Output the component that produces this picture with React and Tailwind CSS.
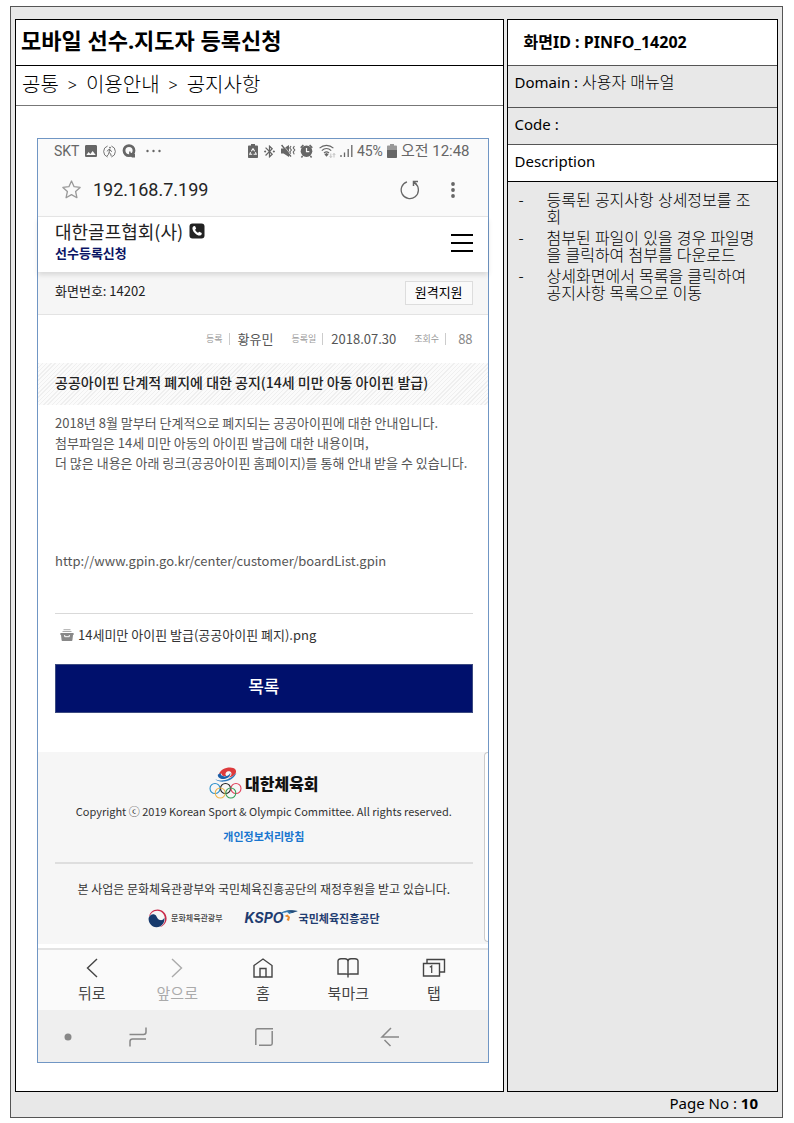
import React from 'react';
import { MdImage, MdBluetoothConnected } from 'react-icons/md';

const notes = [
  '등록된 공지사항 상세정보를 조회',
  '첨부된 파일이 있을 경우 파일명을 클릭하여 첨부를 다운로드',
  '상세화면에서 목록을 클릭하여 공지사항 목록으로 이동',
];

function StatusBar() {
  return (
    <div className="flex h-6 items-center justify-between pr-[18px] pl-4 text-[#666]">
      <div className="flex items-center">
        <span className="mr-1 text-sm">SKT</span>
        <MdImage className="mr-1 h-4 w-4" />
        <svg className="mr-1.5 h-[13px] w-[13px]" viewBox="0 0 13 13" fill="none" stroke="currentColor">
          <path d="M4.6 12A5.8 5.8 0 0 1 4.6 1M8.4 1a5.8 5.8 0 0 1 0 11" strokeWidth="0.9" />
          <circle cx="7" cy="2.6" r="0.9" fill="currentColor" stroke="none" />
          <path d="M6.7 4.2 6 7.4l1.7 1.4.5 2.4M6 7.4l-.6 2-1.4 1.8M4.2 6.4l1-1.6 1.6-.4 1 1.6 1.2.5" strokeWidth="0.9" />
        </svg>
        <svg className="mr-2.5 h-[14px] w-[14px]" viewBox="0 0 14 14" fill="none" stroke="currentColor">
          <circle cx="7" cy="6.6" r="5" strokeWidth="2.8" />
          <path d="M8 8.5v3l2 1.9h3V10" fill="currentColor" stroke="none" />
          <path d="M7.8 7.6v3" strokeWidth="1.4" />
        </svg>
        <svg className="h-1 w-4" viewBox="0 0 16 4" fill="currentColor">
          <circle cx="1.5" cy="2" r="1.2" />
          <circle cx="7.5" cy="2" r="1.2" />
          <circle cx="13.5" cy="2" r="1.2" />
        </svg>
      </div>

      <div className="flex items-center">
        <svg className="mr-1 h-[14px] w-[10px]" viewBox="0 0 10 14" fill="currentColor">
          <path d="M3 0h4v1.6h2.2c.5 0 .8.3.8.8v10.8c0 .5-.3.8-.8.8H.8a.8.8 0 0 1-.8-.8V2.4c0-.5.3-.8.8-.8H3z" />
          <path d="M5 4.5 3.4 7.2M5 4.5l1.6 2.7M2.6 8.2l-.8 2h2.4M7.4 8.2l.8 2H5.6" stroke="#fafafa" fill="none" strokeWidth="1.1" />
        </svg>
        <MdBluetoothConnected className="mr-1 h-[15px] w-[15px]" />
        <svg className="mr-1 h-[14px] w-[15px]" viewBox="0 0 15 14" fill="currentColor">
          <path d="M0 4.5h2.600L8 1v12L2.600 9.500H0z" />
          <path d="M.6 1 10 12.600" stroke="currentColor" strokeWidth="1.600" />
          <path d="M1.600.4 11 12" stroke="#fafafa" strokeWidth="0.600" />
          <path d="m10 2-1.200 2 1.600 2-1.600 2 1 1.600M13.400 2l-1.200 2 1.600 2-1.600 2 1 2.400" stroke="currentColor" fill="none" strokeWidth="1.100" />
        </svg>
        <svg className="mr-1.5 h-[14px] w-[13px]" viewBox="0 0 13 14">
          <circle cx="6.500" cy="7.200" r="5.800" fill="currentColor" />
          <path d="M.7 3.800 3.400 1M12.300 3.800 9.600 1M2.600 12 1.400 13.400M10.400 12l1.200 1.400" stroke="currentColor" strokeWidth="1.600" />
          <path d="M6.500 4v3.600h2.800" stroke="#fafafa" fill="none" strokeWidth="1.200" />
        </svg>
        <svg className="mr-1 h-[15px] w-[17px]" viewBox="0 0 17 15" fill="none" stroke="currentColor" strokeWidth="1.100">
          <path d="M.6 4.200c4-3.800 9.800-3.800 13.800 0M2.800 6.600c2.800-2.600 6.600-2.600 9.400 0M5 9c1.600-1.400 3.400-1.400 5 0" />
          <path d="m6.200 10.400 1.300-.8 1.300.8-1.300 1.600z" fill="currentColor" />
          <path d="M11.800 9.500v4m-1.300-1.300 1.300 1.300 1.300-1.300M15 13.500v-4m-1.200 1.300L15 9.500l1.200 1.300" stroke="#aaa" strokeWidth="0.700" />
        </svg>
        <svg className="mr-1 h-[14px] w-[13px]" viewBox="0 0 13 14" stroke="currentColor" strokeWidth="1.300">
          <path d="M1 11v2M4.500 8.500V13M8.200 5v8M11.800 1v12" />
        </svg>
        <span className="mr-1 text-sm">45%</span>
        <svg className="mr-1 h-[14px] w-[10px]" viewBox="0 0 10 14">
          <path d="M3 0h4v1.600h2.200c.5 0 .8.3.8.8V6H0V2.400c0-.5.3-.8.8-.8H3z" fill="#999" />
          <path d="M0 6h10v7.200c0 .5-.3.8-.8.8H.8a.8.8 0 0 1-.8-.8z" fill="currentColor" />
        </svg>
        <span className="text-[15px]">오전 12:48</span>
      </div>
    </div>
  );
}

function AddressBar() {
  return (
    <div className="flex h-[54px] items-center border-b border-[#e6e6e6] pr-[31px] pl-6 text-[#666]">
      <svg className="h-[19px] w-[19px]" viewBox="0 0 19 19" fill="none" stroke="#999" strokeWidth="1.300" strokeLinejoin="round">
        <path d="m9.500 1 2.600 5.700 6 .7-4.500 4.100 1.300 6.200-5.400-3.100-5.400 3.100 1.300-6.200L.9 7.400l6-.7z" />
      </svg>
      <input
        aria-label="주소"
        defaultValue="192.168.7.199"
        className="ml-3 min-w-0 flex-1 bg-transparent text-lg text-[#252525] outline-none"
      />
      <button aria-label="새로고침">
        <svg className="h-5 w-5" viewBox="0 0 20 20" fill="none" stroke="currentColor" strokeWidth="1.300">
          <path d="M7 1.800A8.600 8.600 0 1 0 15.500 3.500" />
          <path d="M18 1.500h-4.500v4.500M13.500 1.500l3 3" strokeWidth="1.500" />
        </svg>
      </button>
      <button aria-label="더보기" className="ml-[29px]">
        <svg className="h-[18px] w-2" viewBox="0 0 8 18" fill="currentColor">
          <circle cx="4" cy="3" r="1.900" />
          <circle cx="4" cy="9" r="1.900" />
          <circle cx="4" cy="15" r="1.900" />
        </svg>
      </button>
    </div>
  );
}

function SiteHeader() {
  return (
    <header className="relative flex h-[55px] items-center justify-between bg-white pr-[15px] pl-[17px] shadow-[0_3px_5px_rgba(0,0,0,0.12)]">
      <div className="pb-2">
        <div className="flex items-center text-lg leading-6 text-[#222]">
          대한골프협회(사)
          <svg className="ml-1.5 h-4 w-4" viewBox="0 0 16 16">
            <rect x="0.500" y="0.500" width="15" height="15" rx="3" fill="#222" />
            <path d="M4.600 3.200 6 3l1.200 2.600-1.100 1.200c.6 1.300 1.500 2.300 2.900 3l1.300-1.100 2.500 1.300-.3 1.500c-.4 1-1.800 1.300-3.100.9-2.800-.9-5-3.200-5.800-5.900-.4-1.500 0-2.700 1-3.300z" fill="#fff" />
          </svg>
        </div>
        <div className="text-[13px] leading-5 font-bold text-[#0a1464]">선수등록신청</div>
      </div>
      <button aria-label="메뉴" className="mb-1 flex w-[22px] flex-col gap-1.5">
        <span className="h-0.5 bg-black" />
        <span className="h-0.5 bg-black" />
        <span className="h-0.5 bg-black" />
      </button>
    </header>
  );
}

function MetaItem({ label, value, valueClass = 'text-[#555]' }) {
  return (
    <div className="flex items-center">
      <dt className="border-r border-[#ccc] pr-1.5 text-[9px] leading-3 text-[#999]">{label}</dt>
      <dd className={`pl-2 text-[13px] leading-5 ${valueClass}`}>{value}</dd>
    </div>
  );
}

function Notice() {
  return (
    <article className="bg-white">
      <dl className="flex h-12 items-center justify-end gap-[18px] pr-[15px]">
        <MetaItem label="등록" value="황유민" />
        <MetaItem label="등록일" value="2018.07.30" />
        <MetaItem label="조회수" value="88" valueClass="ml-1 text-[#888]" />
      </dl>

      <h2 className="bg-[repeating-linear-gradient(135deg,#efefef_0px,#efefef_1px,#fbfbfb_1px,#fbfbfb_3px)] pt-[9px] pr-[15px] pb-[13px] pl-[17px] text-sm leading-5 font-medium text-[#222]">
        공공아이핀 단계적 폐지에 대한 공지(14세 미만 아동 아이핀 발급)
      </h2>

      <div className="pt-2 pr-[15px] pl-[17px]">
        <div className="text-[13px] leading-5 text-[#555]">
          <p>2018년 8월 말부터 단계적으로 폐지되는 공공아이핀에 대한 안내입니다.</p>
          <p>첨부파일은 14세 미만 아동의 아이핀 발급에 대한 내용이며,</p>
          <p>더 많은 내용은 아래 링크(공공아이핀 홈페이지)를 통해 안내 받을 수 있습니다.</p>
          <p className="mt-[78px]">
            <a href="http://www.gpin.go.kr/center/customer/boardList.gpin">
              http://www.gpin.go.kr/center/customer/boardList.gpin
            </a>
          </p>
        </div>

        <a href="#file" className="mt-[42px] flex h-[42px] items-center border-t border-[#d9d9d9] pl-[5px] text-[13px] text-[#333]">
          <svg className="mr-1 h-3 w-[14px]" viewBox="0 0 14 12">
            <path d="M3.500.700h7M2.500 2.500h9" stroke="#aaa" strokeWidth="1" />
            <path d="M.4 4h13.200v2H13l-.6 5.200c0 .5-.4.800-.8.800H2.400c-.4 0-.8-.3-.8-.8L1 6H.4z" fill="#888" />
            <path d="M4.700 6v1.700h4.600V6" stroke="#fff" fill="none" strokeWidth="1" />
          </svg>
          14세미만 아이핀 발급(공공아이핀 폐지).png
        </a>

        <button className="mt-[9px] h-[49px] w-full border border-[#3c4a80] bg-[#00106c] pb-1.5 text-[17px] font-medium text-white">
          목록
        </button>
      </div>
    </article>
  );
}

function OlympicLogo() {
  return (
    <svg className="h-8 w-[33px]" viewBox="0 0 33 32" fill="none">
      <path d="M10 7.500C11 3 16 .6 21 .6c5 0 7.200 2.800 5.600 6-1.200 2.400-4.200 3.900-7.200 3.800 2.500-1.200 3.800-3.200 2.800-4.900-1-1.600-4-1.500-5.300.2-.8 1.200-.5 2.500.6 3.200-3 .6-5-.4-5-2.400-.9.200-1.800.6-2.500 1z" fill="#dd3a3c" />
      <path d="M8.800 7.800c.8-.7 2-1.200 3-1.200-.2 2 2 3.100 5 2.700 2.500-.4 4-1.700 4.300-3.200 1 1.700-1 4.700-4.800 5.700-4 1-7.700-.8-7.500-4z" fill="#1d5fa8" />
      <path d="M6.200 12.200c6 2.800 14.500 1.300 21.300-6.400-2 5-7 8.400-12.500 8.800-3.500.3-7-.6-8.800-2.400z" fill="#2a78bd" />
      <g strokeWidth="1.100">
        <circle cx="6" cy="21.500" r="5" stroke="#2b8fcb" />
        <circle cx="16.500" cy="21.500" r="5" stroke="#222" />
        <circle cx="27" cy="21.500" r="5" stroke="#e2435c" />
        <circle cx="11.200" cy="26" r="5" stroke="#efb54a" />
        <circle cx="21.800" cy="26" r="5" stroke="#35a05a" />
      </g>
    </svg>
  );
}

function SiteFooter() {
  return (
    <footer className="relative mt-[39px] bg-[#f6f6f6] pt-[15px] pr-[15px] pb-4 pl-[17px] text-center text-[#333]">
      <div className="flex items-center justify-center">
        <OlympicLogo />
        <span className="ml-[3px] text-base leading-8 font-black text-[#111]">대한체육회</span>
      </div>
      <p className="mt-0.5 text-[11px] leading-5">
        Copyright ⓒ 2019 Korean Sport &amp; Olympic Committee. All rights reserved.
      </p>
      <a href="#privacy" className="mt-[5px] block text-[11px] leading-5 font-bold text-[#1976cf]">
        개인정보처리방침
      </a>
      <div className="mt-4 h-0.5 bg-[#dedede]" />
      <p className="mt-[15px] text-xs leading-5">
        본 사업은 문화체육관광부와 국민체육진흥공단의 재정후원을 받고 있습니다.
      </p>
      <div className="mt-[9px] flex h-5 items-center justify-center">
        <svg className="h-[19px] w-[19px]" viewBox="0 0 19 19">
          <path d="M1 9C1 3.500 5 .4 9.600.4c5 0 9 4 9 9.100 0 4.500-3.600 8-7 8.600 3-1.500 5.400-4.200 5.400-7.600C17 5 13 1.800 9.300 1.800 5 1.800 2 5 1 9z" fill="#c92a4a" />
          <path d="M.6 9c1-2.700 3.300-4.200 5.300-3.700 3.300.7 2.800 5.200 6.300 5.800 2 .3 3.700-.8 4.200-2.600.7 5.300-3 9.900-8 9.800C3.600 18 .2 13.800.6 9z" fill="#173a6d" />
        </svg>
        <span className="ml-1 text-[8px] leading-5 font-medium text-[#444]">문화체육관광부</span>
        <span className="ml-[22px] font-['Inter','Noto_Sans',sans-serif] text-sm leading-5 font-bold text-[#1f3c70] italic">
          KSPO
        </span>
        <svg className="-ml-1 h-5 w-[18px]" viewBox="0 0 18 20">
          <path d="M0 6C3 2 9 1.500 18 3c-3 .8-6 2.200-9 3-.5-1.200-1.500-1.800-3-1.600C3 4.500 1.500 5.200 0 6z" fill="#3579ad" />
          <path d="M6.500 2.800c3-1 6-.8 11 .2l-5.500 2c-1-1.200-3-2-5.500-2.200z" fill="#244a78" />
          <path d="m4.500 8 3-1.500L10 9l-1 4-2.500-1L8 9.500z" fill="#e98a2d" />
        </svg>
        <span className="ml-px text-[11px] leading-5 font-bold text-[#1f3c70]">국민체육진흥공단</span>
      </div>
      <span className="absolute top-0 right-0 h-[190px] w-1 rounded-l border-y border-l border-[#ccc] bg-white" />
    </footer>
  );
}

function NavButton({ label, disabled, children }) {
  return (
    <button disabled={disabled} className="flex flex-1 flex-col items-center text-[#444] disabled:text-[#aaa]">
      <svg className="h-6 w-6" viewBox="0 0 24 24" fill="none" stroke="currentColor" strokeWidth="1.400">
        {children}
      </svg>
      <span className="mt-0.5 text-[15px] leading-6">{label}</span>
    </button>
  );
}

function BrowserNav() {
  return (
    <nav className="mt-1 flex h-[62px] border-t-2 border-[#e3e3e3] bg-[#fafafa] px-[11px] pt-1.5">
      <NavButton label="뒤로">
        <path d="m17 3-9.500 9 9.500 9" />
      </NavButton>
      <NavButton label="앞으로" disabled>
        <path d="m7 3 9.500 9L7 21" />
      </NavButton>
      <NavButton label="홈">
        <path d="M3 9.500 12 3l9 6.500V21H3z" />
        <path d="M9 21v-8.500h6V21" />
      </NavButton>
      <NavButton label="북마크">
        <path d="M12 21.500V5.500C12 3.500 10.500 2.800 9 2.800H5C3.200 2.800 2 3.500 2 5v13h7c1.600 0 3-.2 3 1 0-1.200 1.400-1 3-1h7V5c0-1.500-1.200-2.200-3-2.200h-4c-1.500 0-3 .7-3 2.700" />
      </NavButton>
      <NavButton label="탭">
        <path d="M1.500 7.500h16v12.500h-16zM5 7.500v-4h17.500V16h-5" />
        <path d="M7.800 11.300 9.700 10v7" strokeWidth="1.200" />
      </NavButton>
    </nav>
  );
}

function SoftKeys() {
  return (
    <div className="flex h-[52px] items-center bg-[#efefef] pt-0.5 pl-[26px] text-[#888]">
      <svg className="mr-14 h-2 w-2" viewBox="0 0 8 8" fill="currentColor">
        <circle cx="4" cy="4" r="3.500" />
      </svg>
      <svg className="mr-[106px] h-5 w-5" viewBox="0 0 20 20" fill="none" stroke="currentColor" strokeWidth="1.500">
        <path d="M1.500 7.500h14c1.500 0 2.500-.8 2.500-2.500V.5M18 12H4.500C3 12 2 13 2 14.500V19.500" />
      </svg>
      <svg className="mr-[106px] h-5 w-5" viewBox="0 0 20 20" fill="none" stroke="currentColor" strokeWidth="1.500">
        <path d="M1.800 18V3.500c0-1 .7-1.700 1.700-1.700H19M18.200 4v12.500c0 1-.7 1.700-1.700 1.700H5" />
      </svg>
      <svg className="h-5 w-5" viewBox="0 0 20 20" fill="none" stroke="currentColor" strokeWidth="1.500">
        <path d="M11 1 2 10h17M4.500 13 10.500 19" />
      </svg>
    </div>
  );
}

function Phone() {
  return (
    <div className="border border-[#7096c4] bg-white font-['Noto_Sans_CJK_KR',sans-serif]">
      <div className="bg-[#fafafa] font-['Roboto','Noto_Sans_CJK_KR',sans-serif]">
        <StatusBar />
        <AddressBar />
      </div>
      <SiteHeader />
      <div className="flex h-[43px] items-center justify-between border-b border-[#e3e3e3] bg-[#f6f6f6] pr-[15px] pl-[17px] text-[13px] text-[#222]">
        <span className="pb-1">화면번호: 14202</span>
        <button className="h-6 border border-[#ddd] bg-[#fafafa] px-[9px] pb-1 leading-5 text-black">원격지원</button>
      </div>
      <Notice />
      <SiteFooter />
      <div className="font-['Roboto','Noto_Sans_CJK_KR',sans-serif]">
        <BrowserNav />
        <SoftKeys />
      </div>
    </div>
  );
}

export default function App() {
  return (
    <div className="bg-white pt-1.5 pr-[11px] pb-[5px] pl-2.5 font-['Noto_Sans','Noto_Sans_CJK_KR',sans-serif] text-black">
      <div className="border border-[#555] bg-[#e8e8e8] px-1 pt-3">
        <div className="grid grid-cols-[9fr_5fr] gap-[3px]">
          <main className="border border-black bg-white">
            <h1 className="h-[46px] border-b border-black pl-[5px] text-[22px] leading-[41px] font-bold">
              모바일 선수.지도자 등록신청
            </h1>
            <p className="flex h-10 items-center gap-[9px] border-b border-[#777] pl-1.5 pb-0.5 text-xl font-light">
              <span>공통</span>
              <span className="text-base">&gt;</span>
              <span>이용안내</span>
              <span className="text-base">&gt;</span>
              <span>공지사항</span>
            </p>
            <div className="pt-8 pr-3.5 pb-7 pl-[21px]">
              <Phone />
            </div>
          </main>

          <aside className="border border-black">
            <p className="h-[46px] border-b border-[#555] bg-white pl-4 text-base leading-[44px] font-bold">
              화면ID : PINFO_14202
            </p>
            <p className="h-[42px] border-b border-[#555] pl-[7px] text-[15px] leading-8">
              Domain : <span className="text-base font-light">사용자 매뉴얼</span>
            </p>
            <p className="h-[37px] border-b border-[#555] pl-[7px] text-[15px] leading-8">Code :</p>
            <h2 className="h-[37px] border-b border-black bg-white pl-[7px] text-[15px] leading-8">Description</h2>
            <ul className="flex flex-col gap-1 pt-2.5 pr-5 pl-[11px] text-base leading-[17px] font-light">
              {notes.map((note) => (
                <li key={note} className="flex">
                  <span className="w-7 shrink-0">-</span>
                  <span>{note}</span>
                </li>
              ))}
            </ul>
          </aside>
        </div>
        <p className="h-[25px] pr-5 text-right text-[15px] leading-[22px]">
          Page No : <b>10</b>
        </p>
      </div>
    </div>
  );
}
